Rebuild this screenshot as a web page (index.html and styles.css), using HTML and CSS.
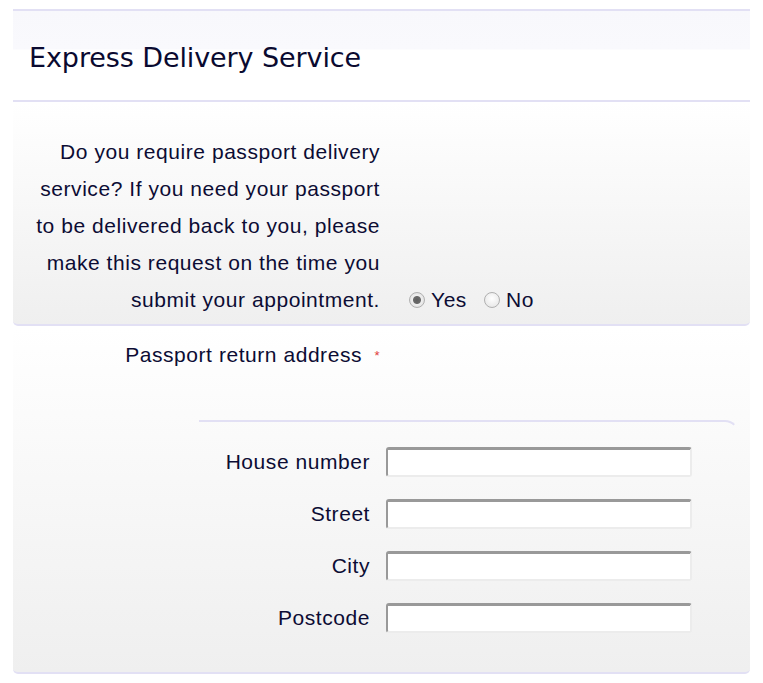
FILE: index.html
```html
<!DOCTYPE html>
<html lang="en">
<head>
<meta charset="utf-8">
<title>Express Delivery Service</title>
<link rel="stylesheet" href="styles.css">
</head>
<body>
<div class="wrap">
  <div class="header">
    <h1 class="title">Express Delivery Service</h1>
  </div>
  <div class="section q-section">
    <div class="q-label">Do you require passport delivery service? If you need your passport to be delivered back to you, please make this request on the time you submit your appointment.</div>
    <div class="q-options">
      <label class="opt"><input type="radio" name="del" class="radio" checked> Yes</label>
      <label class="opt"><input type="radio" name="del" class="radio"> No</label>
    </div>
  </div>
  <div class="section addr-section">
    <div class="addr-head">
      <div class="addr-label">Passport return address <span class="req">*</span></div>
    </div>
    <div class="fieldset">
      <div class="row"><label class="f-label">House number</label><input class="txt" type="text"></div>
      <div class="row"><label class="f-label">Street</label><input class="txt" type="text"></div>
      <div class="row"><label class="f-label">City</label><input class="txt" type="text"></div>
      <div class="row"><label class="f-label">Postcode</label><input class="txt" type="text"></div>
    </div>
  </div>
</div>
</body>
</html>
```
FILE: styles.css
```css
html, body {
  margin: 0;
  padding: 0;
  background: #ffffff;
}
body {
  font-family: "Liberation Sans", Arial, sans-serif;
  color: #0c0c34;
}
.wrap {
  margin: 9px 13px 0 13px;
}
.header {
  border-top: 2px solid #e2e0f4;
  border-bottom: 2px solid #e2e0f4;
  height: 89px;
  background: linear-gradient(to bottom, #f8f8fc 0, #f9f9fd 38px, #ffffff 39px);
  display: flex;
  align-items: center;
}
.title {
  margin: 0 0 0 16px;
  font-family: "DejaVu Sans", Verdana, sans-serif;
  font-weight: normal;
  font-size: 27px;
  color: #0a0a30;
  padding-top: 4px;
  letter-spacing: -0.1px;
}
.section {
  background: linear-gradient(to bottom, #ffffff 0%, #efefef 100%);
  border-bottom: 2px solid #e2e0f4;
  border-radius: 0 0 5px 5px;
  font-size: 21px;
  letter-spacing: 0.55px;
}
.q-section {
  display: flex;
  align-items: flex-end;
  padding: 31px 0 6px 0;
}
.q-label {
  width: 350px;
  padding-left: 17px;
  text-align: right;
  line-height: 37px;
}
.q-options {
  display: flex;
  align-items: center;
  gap: 16px;
  margin-left: 28px;
  height: 37px;
}
.opt {
  display: flex;
  align-items: center;
  gap: 6px;
}
.radio {
  -webkit-appearance: none;
  appearance: none;
  margin: 0 0 0 1px;
  width: 16px;
  height: 16px;
  border-radius: 50%;
  border: 1px solid #b0b0b0;
  background: radial-gradient(circle at 50% 40%, #ffffff 0%, #e2e2e2 100%);
}
.radio:checked {
  background: radial-gradient(circle, #5e5e5e 0, #6a6a6a 3.5px, #efefef 4.5px, #d8d8d8 100%);
}
.addr-section {
  margin-top: 2px;
  padding: 14px 0 39px 0;
}
.addr-head {
  display: flex;
}
.addr-label {
  width: 367px;
  text-align: right;
  line-height: 26px;
}
.req {
  color: #e03c3c;
  font-size: 13px;
  vertical-align: 2px;
  margin-left: 6px;
}
.fieldset {
  margin: 51px 11px 0 186px;
  border-top: 2px solid #e2e0f4;
  border-right: 2px solid transparent;
  border-top-right-radius: 14px;
  padding-top: 25px;
  display: flex;
  flex-direction: column;
  gap: 22px;
}
.row {
  display: flex;
  align-items: center;
}
.f-label {
  width: 171px;
  text-align: right;
  margin-right: 16px;
}
.txt {
  box-sizing: border-box;
  width: 306px;
  height: 30px;
  margin: 0;
  padding: 2px 4px;
  background: #ffffff;
  border-style: solid;
  border-width: 3px 2px 2px 2px;
  border-color: #999999 #ececec #ececec #999999;
  border-radius: 3px;
  font-size: 16px;
}
```
